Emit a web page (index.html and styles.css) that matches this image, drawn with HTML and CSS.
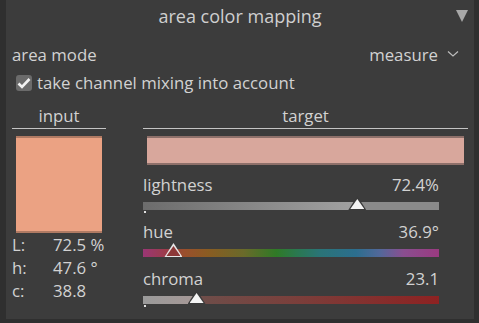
FILE: index.html
```html
<!doctype html>
<html lang="en">
<head>
	<meta charset="UTF-8">
	<title>area color mapping</title>
	<link rel="stylesheet" href="styles.css">
</head>
<body>
<div class="module">
	<div class="head">
		<span class="title">area color mapping</span>
		<span class="collapse"></span>
	</div>
	<div class="row mode">
		<span>area mode</span>
		<span class="combo">measure <svg width="12" height="8" viewBox="0 0 12 8"><path d="M1 1.5 L6 6 L11 1.5" fill="none" stroke="#bdbdbd" stroke-width="1.2"/></svg></span>
	</div>
	<label class="row check">
		<span class="box"><svg width="14" height="12" viewBox="0 0 14 12"><path d="M1.5 6.5 L5 10 L12.5 2" fill="none" stroke="#f2f2f2" stroke-width="2.6"/></svg></span>
		take channel mixing into account
	</label>
	<div class="cols">
		<div class="col left">
			<div class="sect">input</div>
			<div class="swatch in"></div>
			<table class="vals">
				<tr><td>L:</td><td>72.5 %</td></tr>
				<tr><td>h:</td><td>47.6 °</td></tr>
				<tr><td>c:</td><td>38.8</td></tr>
			</table>
		</div>
		<div class="col right">
			<div class="sect">target</div>
			<div class="swatch out"></div>
			<div class="slider">
				<div class="lab"><span>lightness</span><span>72.4%</span></div>
				<div class="bar light"><i class="mark" style="left:72.4%"></i></div>
				<b class="dot"></b>
			</div>
			<div class="slider">
				<div class="lab"><span>hue</span><span>36.9°</span></div>
				<div class="bar hue"><i class="mark red" style="left:10.3%"></i></div>
			</div>
			<div class="slider">
				<div class="lab"><span>chroma</span><span>23.1</span></div>
				<div class="bar chroma"><i class="mark" style="left:18.1%"></i></div>
				<b class="dot"></b>
			</div>
		</div>
	</div>
</div>
</body>
</html>
```

FILE: styles.css
```css
*{margin:0; padding:0; box-sizing:border-box;}
body{
	background:#2f2f2f;
	font-family:"Open Sans", "Noto Sans", sans-serif;
	color:#d2d2d2;
	overflow:hidden;
}

.module{
	width:468px;
	height:319px;
	margin-left:6px;
	background:#3c3c3c;
	padding:0 6px;
}

.head{
	height:36px;
	display:flex;
	align-items:center;
	justify-content:center;
	position:relative;
	padding-bottom:4px;
}
.title{font-size:18px; color:#cfcfcf; line-height:20px;}
.collapse{
	position:absolute;
	right:0; top:10px;
	width:0; height:0;
	border-left:6.5px solid transparent;
	border-right:6.5px solid transparent;
	border-top:12px solid #a8a8a8;
}

.row{display:flex; align-items:center; font-size:16.8px; line-height:20px;}
.mode{height:38px; justify-content:space-between;}
.combo{display:flex; align-items:center; gap:9px; padding-right:9px;}
.combo svg{margin-top:-3px;}

.check{height:17px; padding-left:4px; gap:5px;}
.box{
	width:16px; height:16px;
	background:#6b6b6b;
	border-radius:3px;
	display:flex; align-items:center; justify-content:center;
}

.cols{display:flex; gap:37px;}
.col.left{width:94px;}
.col.right{flex:1;}

.sect{
	text-align:center;
	font-size:16.8px;
	height:38px;
	line-height:20px;
	padding-top:15px;
	border-bottom:1px solid #c4c4c4;
	margin-bottom:7px;
}

.swatch{border-top:2px solid #5a4a44; border-bottom:2px solid #5a4a44;}
.swatch.in{margin:0 4px; height:97px; background:#eba283; border-color:#b07a63;}
.swatch.out{margin:0 4px; height:29px; background:#d8a79c; border-color:#8e706a;}

.vals{font-size:16.8px; line-height:20px; border-collapse:collapse;}
.vals td{height:23px; padding:0;}
.vals td:first-child{width:41px;}

.slider{position:relative; padding-right:29px; height:47px;}
.lab{display:flex; justify-content:space-between; font-size:16.8px; line-height:20px; height:30px; padding-top:10px;}
.bar{height:8px; position:relative; margin-top:7px;}
.bar.light{background:linear-gradient(to right,#6c6c6c 0%,#a2a2a2 72.4%,#8a8a8a 72.4%,#8a8a8a 100%);}
.bar.hue{background:linear-gradient(to right,#9a3675 0%,#9c3c48 8%,#9a4f2c 14%,#8a5c22 22%,#6a6a2a 34%,#2f7a26 45%,#2a7850 52%,#2a7478 60%,#2c6e8e 72%,#52689a 80%,#8a4e90 88%,#9a3a80 100%);}
.bar.chroma{background:linear-gradient(to right,#9a9a9a 0%,#a69896 18.1%,#6e4e4a 18.1%,#7a403c 50%,#8e2222 100%);}
.mark{
	position:absolute;
	bottom:0;
	width:18px; height:14px;
	margin-left:-9px;
	background:#3a3a3a;
	clip-path:polygon(50% 0,100% 100%,0 100%);
}
.mark:after{
	content:"";
	position:absolute;
	left:2px; right:2px; top:3px; bottom:1px;
	background:#f4f4f4;
	clip-path:polygon(50% 0,100% 100%,0 100%);
}
.mark.red{background:#e6e6e6;}
.mark.red:after{background:#8c3838;}
.dot{position:absolute; left:1px; top:46px; width:2px; height:2px; background:#e0e0e0;}
```
